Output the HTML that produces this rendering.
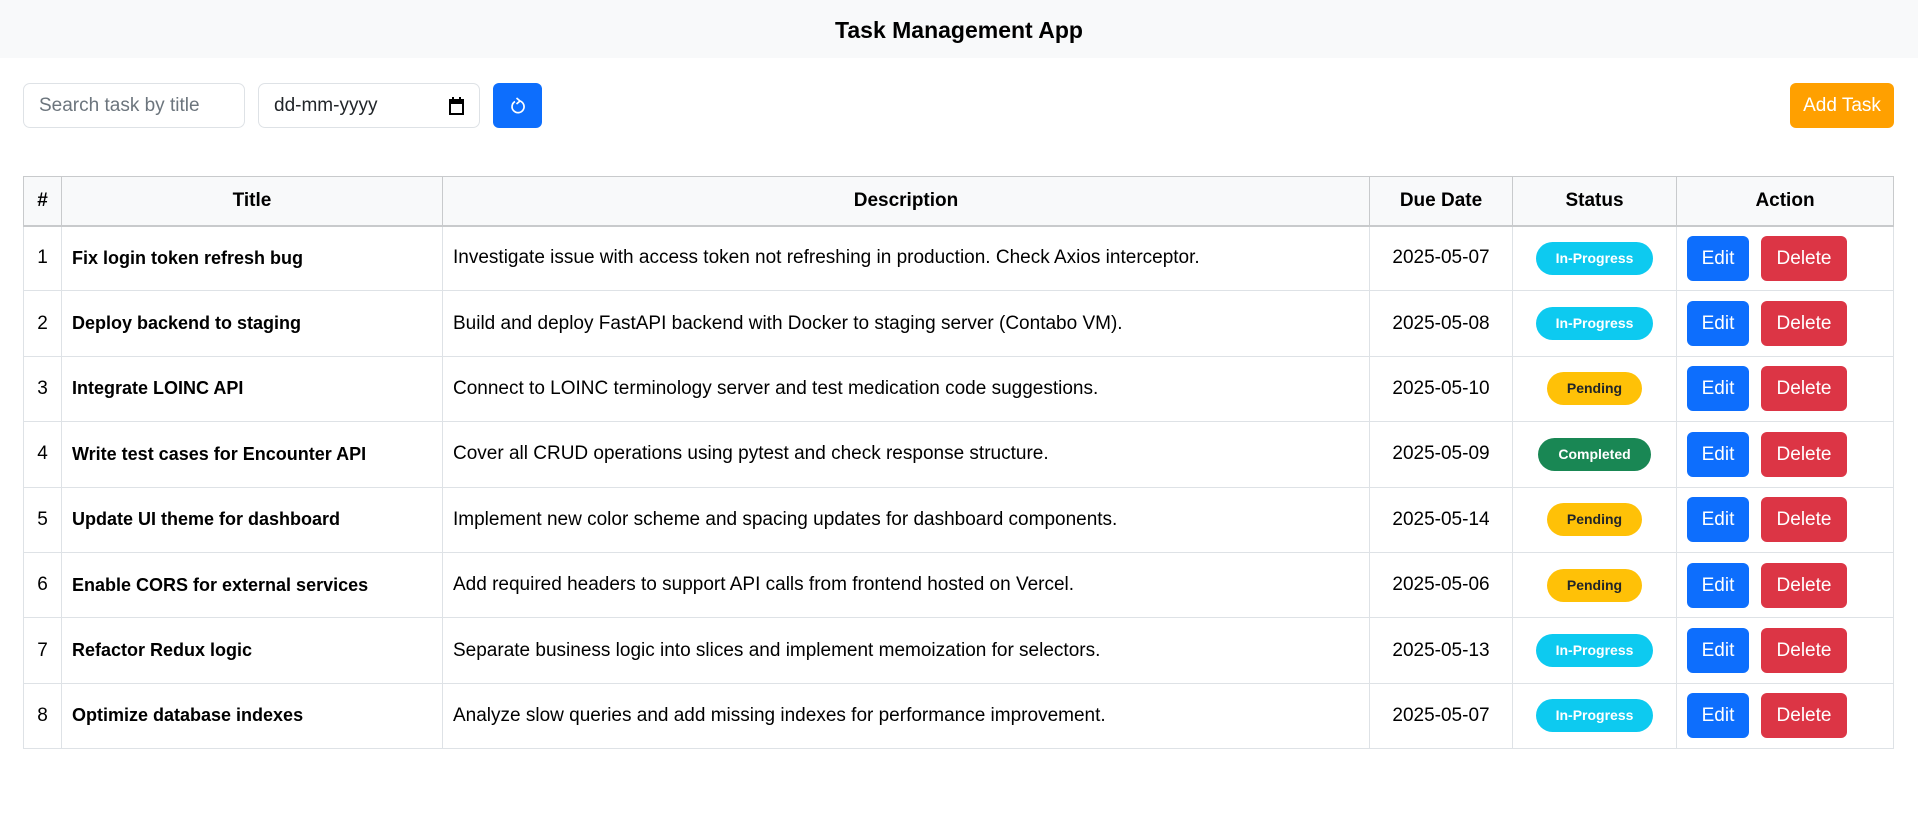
<!DOCTYPE html>
<html><head><meta charset="utf-8"><style>
*{box-sizing:border-box;margin:0;padding:0}
body{width:1918px;height:819px;background:#fff;font-family:"Liberation Sans",sans-serif;color:#212529;position:relative;overflow:hidden}
.hdr{height:58px;background:#f8f9fa;text-align:center;font-weight:bold;font-size:23px;line-height:60px;color:#000}
.inp{position:absolute;top:83px;height:45px;border:1px solid #dee2e6;border-radius:7px;font-size:19px;line-height:43px;padding-left:15px;white-space:nowrap;overflow:hidden}
.btn{position:absolute;border-radius:6px;color:#fff;font-size:19px;text-align:center}
table{position:absolute;left:23px;top:176px;width:1871px;border-collapse:collapse;font-size:19px}
th,td{border:1px solid #dee2e6}
th{background:#f8f9fa;height:49px;font-weight:bold;border-color:#c8cacc;border-bottom:2px solid #c8cacc;color:#000;font-size:19px}
td{height:65.4px;padding:0 10px;color:#000;white-space:nowrap}
td.c{text-align:center}
td.b{font-weight:bold;font-size:18px}
.bd{display:inline-block;height:33px;line-height:33px;border-radius:17px;font-size:14px;font-weight:bold;padding:0 20px;color:#fff}
.ip{background:#0dcaf0}.pe{background:#ffc107;color:#212529}.co{background:#198754}
.e,.d{display:inline-block;height:45px;line-height:45px;border-radius:6px;color:#fff;font-size:19px;text-align:center;vertical-align:middle}
.e{background:#0d6efd;width:62px}.d{background:#dc3545;width:86px;margin-left:12px}
</style></head><body>
<div class="hdr">Task Management App</div>
<div class="inp" style="left:23px;width:222px;color:#6c757d">Search task by title</div>
<div class="inp" style="left:258px;width:222px;color:#212529">dd-mm-yyyy<svg style="position:absolute;right:15px;top:13px" width="15" height="18" viewBox="0 0 15 18"><rect x="1" y="3" width="13" height="14" fill="none" stroke="#000" stroke-width="2"/><rect x="1" y="3" width="13" height="4" fill="#000"/><rect x="3" y="0" width="2" height="4" fill="#000"/><rect x="10" y="0" width="2" height="4" fill="#000"/></svg></div>
<div class="btn" style="left:493px;top:83px;width:49px;height:45px;background:#0d6efd"><svg style="margin-top:14px" width="17" height="18" viewBox="0 0 17 18"><path d="M6 4.5 A6 6 0 1 0 11 4" fill="none" stroke="#fff" stroke-width="1.7"/><path d="M7.5 1 L11 4 L7.5 7" fill="none" stroke="#fff" stroke-width="1.7"/></svg></div>
<div class="btn" style="left:1790px;top:83px;width:104px;height:45px;line-height:45px;background:#ffa000">Add Task</div>
<table>
<tr><th style="width:38px">#</th><th style="width:381px">Title</th><th style="width:927px">Description</th><th style="width:143px">Due Date</th><th style="width:164px">Status</th><th>Action</th></tr>
<tr><td class="c">1</td><td class="b">Fix login token refresh bug</td><td>Investigate issue with access token not refreshing in production. Check Axios interceptor.</td><td class="c">2025-05-07</td><td class="c"><span class="bd ip">In-Progress</span></td><td><span class="e">Edit</span><span class="d">Delete</span></td></tr>
<tr><td class="c">2</td><td class="b">Deploy backend to staging</td><td>Build and deploy FastAPI backend with Docker to staging server (Contabo VM).</td><td class="c">2025-05-08</td><td class="c"><span class="bd ip">In-Progress</span></td><td><span class="e">Edit</span><span class="d">Delete</span></td></tr>
<tr><td class="c">3</td><td class="b">Integrate LOINC API</td><td>Connect to LOINC terminology server and test medication code suggestions.</td><td class="c">2025-05-10</td><td class="c"><span class="bd pe">Pending</span></td><td><span class="e">Edit</span><span class="d">Delete</span></td></tr>
<tr><td class="c">4</td><td class="b">Write test cases for Encounter API</td><td>Cover all CRUD operations using pytest and check response structure.</td><td class="c">2025-05-09</td><td class="c"><span class="bd co">Completed</span></td><td><span class="e">Edit</span><span class="d">Delete</span></td></tr>
<tr><td class="c">5</td><td class="b">Update UI theme for dashboard</td><td>Implement new color scheme and spacing updates for dashboard components.</td><td class="c">2025-05-14</td><td class="c"><span class="bd pe">Pending</span></td><td><span class="e">Edit</span><span class="d">Delete</span></td></tr>
<tr><td class="c">6</td><td class="b">Enable CORS for external services</td><td>Add required headers to support API calls from frontend hosted on Vercel.</td><td class="c">2025-05-06</td><td class="c"><span class="bd pe">Pending</span></td><td><span class="e">Edit</span><span class="d">Delete</span></td></tr>
<tr><td class="c">7</td><td class="b">Refactor Redux logic</td><td>Separate business logic into slices and implement memoization for selectors.</td><td class="c">2025-05-13</td><td class="c"><span class="bd ip">In-Progress</span></td><td><span class="e">Edit</span><span class="d">Delete</span></td></tr>
<tr><td class="c">8</td><td class="b">Optimize database indexes</td><td>Analyze slow queries and add missing indexes for performance improvement.</td><td class="c">2025-05-07</td><td class="c"><span class="bd ip">In-Progress</span></td><td><span class="e">Edit</span><span class="d">Delete</span></td></tr>
</table>
</body></html>
